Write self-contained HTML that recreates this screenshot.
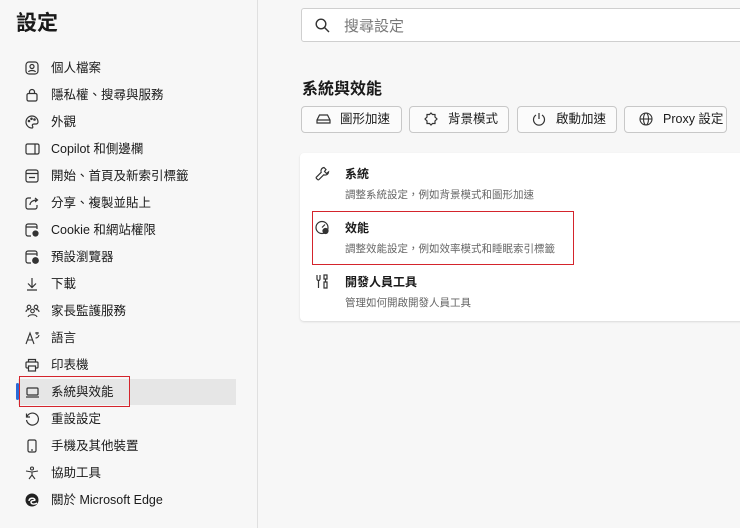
<!DOCTYPE html>
<html><head><meta charset="utf-8"><style>
*{margin:0;padding:0;box-sizing:border-box}
body{width:740px;height:528px;background:#f7f7f7;font-family:"Liberation Sans","Noto Sans CJK TC",sans-serif;color:#1a1a1a;position:relative;overflow:hidden}
.side{position:absolute;left:0;top:0;width:258px;height:528px;border-right:1px solid #e0e0e0}
.title{position:absolute;left:16px;top:7px;font-size:21px;font-weight:bold}
.it{position:absolute;left:18px;width:218px;height:26px;font-size:12.5px;line-height:26px;padding-left:33px}
.it svg{position:absolute;left:7px;top:6px}
.sel{background:#e6e6e6}
.bar{position:absolute;left:16px;top:383px;width:3px;height:17px;background:#2b6bd8;border-radius:2px}
.red{position:absolute;border:1.5px solid #d4242c}
.search{position:absolute;left:301px;top:8px;width:460px;height:34px;background:#fff;border:1px solid #cfcfcf;border-radius:3px}
.search span{position:absolute;left:42px;top:6px;font-size:15px;color:#777}
h2{position:absolute;left:302px;top:75px;font-size:16px;font-weight:bold}
.btn{position:absolute;top:106px;height:27px;border:1px solid #c8c8c8;border-radius:4px;background:#fbfbfb;font-size:12.5px;line-height:25px}
.btn svg{position:absolute;left:14px;top:5px}
.btn span{position:absolute;left:38px}
.card{position:absolute;left:300px;top:153px;width:460px;height:168px;background:#fff;border-radius:4px;box-shadow:0 1px 2px rgba(0,0,0,.12)}
.ci{position:absolute;left:45px;font-size:12px;font-weight:bold}
.cd{position:absolute;left:45px;font-size:10.5px;color:#666}
.card svg{position:absolute;left:15px}
</style></head><body>
<div class="side">
<div class="title">設定</div>
<div class="it sel" style="top:379px"></div>
<div class="bar"></div>
<div class="it" style="top:55px"><svg width="14" height="14" viewBox="0 0 14 14" fill="none" stroke="#333" stroke-width="1.2"><rect x="1" y="1" width="12" height="12" rx="3"/><circle cx="7" cy="5.5" r="2"/><path d="M3.5 11c1-2 6-2 7 0"/></svg>個人檔案</div>
<div class="it" style="top:82px"><svg width="14" height="14" viewBox="0 0 14 14" fill="none" stroke="#333" stroke-width="1.2"><rect x="2" y="5.5" width="10" height="7.5" rx="1.5"/><path d="M4.5 5.5V4a2.5 2.5 0 0 1 5 0v1.5"/></svg>隱私權、搜尋與服務</div>
<div class="it" style="top:109px"><svg width="14" height="14" viewBox="0 0 14 14" fill="none" stroke="#333" stroke-width="1.2"><path d="M7 1a6 6 0 0 0 0 12c1 0 1-1 .5-2s0-2 1.5-2h2a2 2 0 0 0 2-2A6 6 0 0 0 7 1z"/><circle cx="4" cy="6" r=".7"/><circle cx="6.5" cy="3.8" r=".7"/><circle cx="9.5" cy="4.5" r=".7"/></svg>外觀</div>
<div class="it" style="top:136px"><svg width="15" height="14" viewBox="0 0 15 14" fill="none" stroke="#333" stroke-width="1.2"><rect x="1" y="2" width="13" height="10" rx="1.5"/><path d="M10 2v10"/></svg>Copilot 和側邊欄</div>
<div class="it" style="top:163px"><svg width="14" height="14" viewBox="0 0 14 14" fill="none" stroke="#333" stroke-width="1.2"><rect x="1" y="1" width="12" height="12" rx="2"/><path d="M1 4.5h12M4 8.5h6"/></svg>開始、首頁及新索引標籤</div>
<div class="it" style="top:190px"><svg width="14" height="14" viewBox="0 0 14 14" fill="none" stroke="#333" stroke-width="1.2"><path d="M6 2H3a2 2 0 0 0-2 2v7a2 2 0 0 0 2 2h7a2 2 0 0 0 2-2V9"/><path d="M5 9c0-3 3-5 7-5M10 2l2.5 2L10 6"/></svg>分享、複製並貼上</div>
<div class="it" style="top:217px"><svg width="14" height="14" viewBox="0 0 14 14" fill="none" stroke="#333" stroke-width="1.2"><path d="M6 13H3a2 2 0 0 1-2-2V3a2 2 0 0 1 2-2h7a2 2 0 0 1 2 2v3M1 4h11"/><circle cx="10.5" cy="10.5" r="2.5" fill="#333"/></svg>Cookie 和網站權限</div>
<div class="it" style="top:244px"><svg width="14" height="14" viewBox="0 0 14 14" fill="none" stroke="#333" stroke-width="1.2"><path d="M6 13H3a2 2 0 0 1-2-2V3a2 2 0 0 1 2-2h7a2 2 0 0 1 2 2v3M1 4h11"/><circle cx="10.5" cy="10.5" r="2.8" fill="#333"/></svg>預設瀏覽器</div>
<div class="it" style="top:271px"><svg width="14" height="14" viewBox="0 0 14 14" fill="none" stroke="#333" stroke-width="1.2"><path d="M7 1v9M3 6.5l4 4 4-4M2 13h10"/></svg>下載</div>
<div class="it" style="top:298px"><svg width="15" height="14" viewBox="0 0 15 14" fill="none" stroke="#333" stroke-width="1.1"><circle cx="4" cy="3" r="1.8"/><circle cx="11" cy="3" r="1.8"/><circle cx="7.5" cy="7" r="1.8"/><path d="M1 8c0-2 2-3 3-2M14 8c0-2-2-3-3-2M3 13c1-3 8-3 9 0"/></svg>家長監護服務</div>
<div class="it" style="top:325px"><svg width="15" height="14" viewBox="0 0 15 14" fill="none" stroke="#333" stroke-width="1.1"><path d="M1 13L5 2l4 11M2.5 9h5M10 2h4M12 1v3M10.5 7c2 0 3-1 3.5-3"/></svg>語言</div>
<div class="it" style="top:352px"><svg width="14" height="14" viewBox="0 0 14 14" fill="none" stroke="#333" stroke-width="1.2"><path d="M3.5 4V1.5h7V4M3.5 10H2a1 1 0 0 1-1-1V5a1 1 0 0 1 1-1h10a1 1 0 0 1 1 1v4a1 1 0 0 1-1 1h-1.5"/><rect x="3.5" y="8" width="7" height="5"/></svg>印表機</div>
<div class="it" style="top:379px"><svg width="15" height="14" viewBox="0 0 15 14" fill="none" stroke="#333" stroke-width="1.2"><rect x="2" y="3" width="11" height="7" rx="1"/><path d="M1 12h13"/></svg>系統與效能</div>
<div class="it" style="top:406px"><svg width="14" height="14" viewBox="0 0 14 14" fill="none" stroke="#333" stroke-width="1.2"><path d="M2 4.5A6 6 0 1 1 1.5 8M1.5 1.5v3.5H5"/></svg>重設設定</div>
<div class="it" style="top:433px"><svg width="14" height="14" viewBox="0 0 14 14" fill="none" stroke="#333" stroke-width="1.2"><rect x="3" y="1" width="8" height="12" rx="1.5"/><path d="M6 11h2"/></svg>手機及其他裝置</div>
<div class="it" style="top:460px"><svg width="14" height="14" viewBox="0 0 14 14" fill="none" stroke="#333" stroke-width="1.1"><circle cx="7" cy="2.5" r="1.5"/><path d="M1 5l6 1 6-1M7 6v3l-3 4M7 9l3 4"/></svg>協助工具</div>
<div class="it" style="top:487px"><svg width="14" height="14" viewBox="0 0 14 14"><circle cx="7" cy="7" r="6.5" fill="#222"/><path d="M4 8c0-3 5-4 6-1-1 1-4 0-4 2 0 2 3 3 6 1" stroke="#fff" stroke-width="1.4" fill="none"/></svg>關於 Microsoft Edge</div>
<div class="red" style="left:19px;top:376px;width:111px;height:31px"></div>
</div>

<div class="search"><svg style="position:absolute;left:13px;top:9px" width="15" height="15" viewBox="0 0 15 15" fill="none" stroke="#333" stroke-width="1.4"><circle cx="6" cy="6" r="4.8"/><path d="M9.5 9.5L14 14"/></svg><span>搜尋設定</span></div>
<h2>系統與效能</h2>
<div class="btn" style="left:301px;width:101px"><svg width="15" height="14" viewBox="0 0 15 14" fill="none" stroke="#333" stroke-width="1.2"><path d="M1 8l2.5-5h8L14 8v3H1zM1 8h13"/></svg><span>圖形加速</span></div>
<div class="btn" style="left:409px;width:100px"><svg width="14" height="14" viewBox="0 0 14 14" fill="none" stroke="#333" stroke-width="1.2"><path d="M7 1l1.5 1.5h2.5v2.5L13 7l-2 2v2.5H8.5L7 13l-1.5-1.5H3V9L1 7l2-2V2.5h2.5z"/></svg><span>背景模式</span></div>
<div class="btn" style="left:517px;width:100px"><svg width="14" height="14" viewBox="0 0 14 14" fill="none" stroke="#333" stroke-width="1.2"><path d="M7 1v6M4 3a5.5 5.5 0 1 0 6 0"/></svg><span>啟動加速</span></div>
<div class="btn" style="left:624px;width:103px"><svg width="14" height="14" viewBox="0 0 14 14" fill="none" stroke="#333" stroke-width="1.1"><circle cx="7" cy="7" r="6"/><ellipse cx="7" cy="7" rx="2.5" ry="6"/><path d="M1 7h12"/></svg><span>Proxy 設定</span></div>

<div class="card">
<svg style="top:13px" width="15" height="15" viewBox="0 0 15 15" fill="none" stroke="#333" stroke-width="1.2"><path d="M9 1.5a3.5 3.5 0 0 0-2.8 4.8L1.5 11a1 1 0 0 0 0 1.5l1 1a1 1 0 0 0 1.5 0l4.7-4.7A3.5 3.5 0 0 0 13.5 6l-2 1.5-2-2L11 3.5z"/></svg>
<div class="ci" style="top:12px">系統</div>
<div class="cd" style="top:34px">調整系統設定，例如背景模式和圖形加速</div>
<svg style="top:67px" width="15" height="15" viewBox="0 0 15 15" fill="none" stroke="#333" stroke-width="1.2"><circle cx="7" cy="7.5" r="6"/><path d="M7 7.5l3-3"/><circle cx="10.5" cy="11" r="2.5" fill="#333"/></svg>
<div class="ci" style="top:66px">效能</div>
<div class="cd" style="top:88px">調整效能設定，例如效率模式和睡眠索引標籤</div>
<svg style="top:121px" width="14" height="15" viewBox="0 0 14 15" fill="none" stroke="#333" stroke-width="1.2"><path d="M2 1v4a1.5 1.5 0 0 0 3 0V1M3.5 6v8M9 1h3v4h-3zM10.5 5v3M9 8h3v6H9z"/></svg>
<div class="ci" style="top:120px">開發人員工具</div>
<div class="cd" style="top:142px">管理如何開啟開發人員工具</div>
</div>
<div class="red" style="left:312px;top:211px;width:262px;height:54px"></div>
</body></html>
